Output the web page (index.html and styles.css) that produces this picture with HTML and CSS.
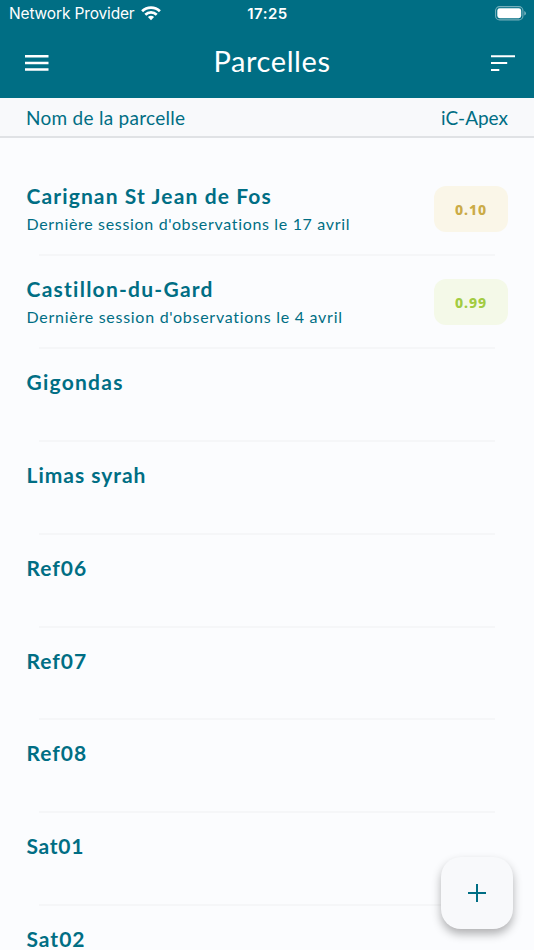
FILE: index.html
```html
<!DOCTYPE html>
<html lang="fr">
<head>
<meta charset="utf-8">
<title>Parcelles</title>
<link rel="stylesheet" href="styles.css">
</head>
<body>
<div class="app">
  <header class="header">
    <div class="status">
      <div class="carrier"><span class="carrier-name">Network Provider</span>
        <svg width="20" height="15" viewBox="0 0 20 15" fill="none" stroke="#fff" stroke-width="2.7"><path d="M1.1 5.2a12.7 12.7 0 0 1 17.8 0M4.3 8.7a8.2 8.2 0 0 1 11.4 0"/><path d="M10 14.2 6.9 11.1a4.5 4.5 0 0 1 6.2 0z" fill="#fff" stroke="none"/></svg>
      </div>
      <div class="clock">17:25</div>
      <svg class="battery" width="32" height="15" viewBox="0 0 32 15"><rect x=".6" y=".6" width="27.3" height="13.3" rx="4" fill="none" stroke="#fff" stroke-opacity=".45" stroke-width="1.1"/><rect x="2.3" y="2.3" width="23.9" height="9.9" rx="2.4" fill="#fff"/><path d="M29.3 5v4.6q1.6-.7 1.6-2.3T29.3 5z" fill="#fff" fill-opacity=".5"/></svg>
    </div>
    <div class="bar">
      <svg width="24" height="18" viewBox="0 0 24 18" fill="#fff"><path d="M0 1h23.5v2.5H0zM0 7.7h23.5v2.5H0zM0 14.2h23.5v2.5H0z"/></svg>
      <h1 class="title">Parcelles</h1>
      <svg width="24" height="18" viewBox="0 0 24 18" fill="#fff"><path d="M0 1.3h24v2H0zM0 8h16.2v2H0zM0 15h8.3v2H0z"/></svg>
    </div>
  </header>
  <div class="columns"><span class="col-name">Nom de la parcelle</span><span class="col-apex">iC-Apex</span></div>
  <main class="list">
    <div class="row"><div><h2 class="name">Carignan St Jean de Fos</h2><p class="session">Dernière session d'observations le 17 avril</p></div><span class="badge amber">0.10</span></div>
    <div class="row"><div><h2 class="name wide">Castillon-du-Gard</h2><p class="session spaced">Dernière session d'observations le 4 avril</p></div><span class="badge green">0.99</span></div>
    <div class="row"><h2 class="name wide">Gigondas</h2></div>
    <div class="row"><h2 class="name snug">Limas syrah</h2></div>
    <div class="row"><h2 class="name snug">Ref06</h2></div>
    <div class="row"><h2 class="name snug">Ref07</h2></div>
    <div class="row"><h2 class="name snug">Ref08</h2></div>
    <div class="row"><h2 class="name tight">Sat01</h2></div>
    <div class="row"><h2 class="name snug">Sat02</h2></div>
  </main>
  <button class="add" aria-label="Ajouter"><svg width="18" height="18" viewBox="0 0 18 18" stroke="#006e84" stroke-width="2"><path d="M0 9h18M9 0v18"/></svg></button>
</div>
</body>
</html>
```
FILE: styles.css
```css
* { box-sizing: border-box; margin: 0; padding: 0; }
body { background: #fbfcfe; font-family: Lato, sans-serif; color: #006e84; }
.app { position: relative; height: 950px; overflow: hidden; }
.header { height: 98px; background: #006e84; color: #fff; }
.status { height: 27px; display: grid; grid-template-columns: 1fr auto 1fr; align-items: center; padding: 0 7px 0 9px; font-family: Inter, sans-serif; font-size: 15.5px; }
.carrier { display: flex; align-items: center; gap: 6px; white-space: nowrap; }
.carrier-name { letter-spacing: -0.15px; }
.clock { font-weight: 600; font-size: 15px; letter-spacing: 0.5px; margin-left: -1px; }
.battery { justify-self: end; }
.bar { height: 71px; padding: 0 19px 0 25px; display: flex; justify-content: space-between; align-items: center; }
.title { font-size: 29px; font-weight: 400; letter-spacing: 0.6px; line-height: 36px; padding: 0 0 3px 4px; }
.columns { height: 40px; padding: 0 26px; display: flex; justify-content: space-between; align-items: center; background: #f8f9fb; border-bottom: 2px solid #e0e2e5; font-size: 19px; }
.col-name { letter-spacing: 0.28px; }
.list { padding-top: 25.3px; }
.row { height: 92.86px; padding: 19px 26px 0; display: flex; justify-content: space-between; align-items: flex-start; background: linear-gradient(#f5f6f8, #f5f6f8) 39px 100% / 456px 2px no-repeat; }
.name { font-size: 21px; line-height: 28px; font-weight: 700; letter-spacing: 1.12px; padding-left: 0.5px; white-space: nowrap; }
.wide { letter-spacing: 1.25px; }
.snug { letter-spacing: 0.98px; }
.tight { letter-spacing: 0.7px; }
.session { font-size: 16px; line-height: 20px; margin-top: 4px; letter-spacing: 0.67px; padding-left: 0.5px; white-space: nowrap; }
.spaced { letter-spacing: 0.73px; }
.badge { width: 74px; height: 46px; margin-top: 4px; border-radius: 12px; display: flex; align-items: center; justify-content: center; font-family: "Noto Sans", sans-serif; font-size: 14px; font-weight: 800; letter-spacing: 0.9px; }
.amber { background: #faf6e8; color: #cbab47; }
.green { background: #f4f9e8; color: #a2cc42; }
.add { position: absolute; left: 441px; top: 857px; width: 72px; height: 72px; border: 0; border-radius: 20px; background: #f8f9fb; display: flex; align-items: center; justify-content: center; box-shadow: 0 5px 10px rgba(0,0,0,.3); }
```
